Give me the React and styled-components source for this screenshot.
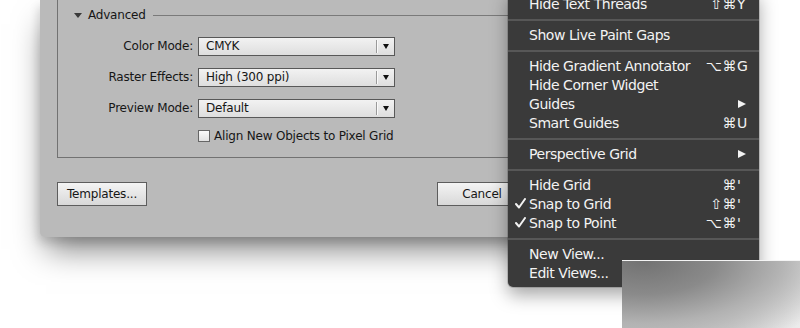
import React from "react";
import styled, { createGlobalStyle } from "styled-components";

const Global = createGlobalStyle`
  html, body { margin: 0; padding: 0; background: #ffffff; }
  body { font-family: "DejaVu Sans", "Liberation Sans", sans-serif; }
`;

const Page = styled.div`
  position: relative;
  width: 800px;
  height: 328px;
  overflow: hidden;
  background: #ffffff;
  padding-left: 40px;
  box-sizing: border-box;
`;

const Dialog = styled.div`
  width: 504px;
  box-sizing: border-box;
  background: #bababa;
  border-radius: 0 0 5px 5px;
  padding: 0 17px 31px;
  box-shadow: 0 18px 30px -6px rgba(0, 0, 0, 0.5), -2px 6px 10px rgba(0, 0, 0, 0.12);
  font-size: 12px;
  letter-spacing: -0.2px;
  color: #161616;
`;

const GroupBox = styled.div`
  border: 1px solid #727272;
  border-top: none;
  padding: 6px 0 15px;
`;

const Disclosure = styled.div`
  display: flex;
  align-items: center;
  height: 18px;
  padding-left: 16px;
  gap: 6px;
`;

const Triangle = styled.span`
  width: 0;
  height: 0;
  border-left: 4px solid transparent;
  border-right: 4px solid transparent;
  border-top: 5px solid #3a3a3a;
  margin-top: 1px;
`;

const Rule = styled.span`
  flex: 1;
  height: 1px;
  background: #7a7a7a;
  margin-left: 1px;
`;

const Form = styled.div`
  display: grid;
  grid-template-columns: 135px 197px;
  column-gap: 5px;
  row-gap: 12px;
  margin-top: 13px;
`;

const Label = styled.label`
  justify-self: end;
  align-self: center;
  line-height: 19px;
`;

const Select = styled.div`
  display: flex;
  align-items: center;
  height: 19px;
  box-sizing: border-box;
  border: 1px solid #585858;
  background: linear-gradient(#f2f2f2, #dedede);
`;

const SelectValue = styled.span`
  flex: 1;
  padding-left: 7px;
  line-height: 17px;
`;

const SelectDivider = styled.span`
  width: 1px;
  height: 13px;
  background: #9a9a9a;
  box-shadow: 1px 0 0 #fafafa;
`;

const SelectArrow = styled.span`
  width: 17px;
  display: flex;
  justify-content: center;
  &::after {
    content: "";
    border-left: 3.5px solid transparent;
    border-right: 3.5px solid transparent;
    border-top: 5px solid #111;
  }
`;

const CheckRow = styled.div`
  grid-column: 2;
  display: flex;
  align-items: center;
  gap: 4px;
  height: 12px;
`;

const CheckBox = styled.span`
  width: 12px;
  height: 12px;
  box-sizing: border-box;
  border: 1px solid #666;
  background: linear-gradient(#fafafa, #e2e2e2);
`;

const Footer = styled.div`
  display: flex;
  justify-content: space-between;
  margin-top: 24px;
`;

const Button = styled.button`
  width: 90px;
  height: 24px;
  box-sizing: border-box;
  border: 1px solid #5d5d5d;
  background: linear-gradient(#f4f4f4, #d8d8d8);
  font-family: "DejaVu Sans", sans-serif;
  font-size: 12px;
  letter-spacing: -0.2px;
  color: #161616;
  padding: 0;
`;

const Menu = styled.div`
  position: absolute;
  left: 508px;
  top: -10px;
  width: 251px;
  background: #3a3a3a;
  border-radius: 0 0 5px 5px;
  padding: 4px 0 5px;
  box-shadow: 0 8px 18px rgba(0, 0, 0, 0.35), 0 0 0 1px rgba(0, 0, 0, 0.15);
  font-size: 14px;
  letter-spacing: -0.45px;
  color: #f3f3f3;
`;

const Item = styled.div`
  display: flex;
  align-items: center;
  height: 19px;
  padding-left: 7px;
  padding-right: 12px;
`;

const CheckSlot = styled.span`
  width: 14px;
  display: flex;
  align-items: center;
`;

const ItemText = styled.span`
  flex: 1;
`;

const Shortcut = styled.span`
  display: flex;
  letter-spacing: 0.5px;
  font-size: 14px;
`;

const Mods = styled.span`
  text-align: right;
`;

const Key = styled.span`
  width: ${(p) => p.$w || 10}px;
  text-align: left;
  letter-spacing: 0;
`;

const SubArrow = styled.span`
  width: 0;
  height: 0;
  margin-right: 1px;
  border-top: 4.5px solid transparent;
  border-bottom: 4.5px solid transparent;
  border-left: 8px solid #f3f3f3;
`;

const Separator = styled.div`
  height: 2px;
  margin: 6px 0 4px;
  background: #575757;
`;

const Patch = styled.div`
  position: absolute;
  left: 622px;
  top: 260px;
  width: 178px;
  height: 68px;
  border-top: 1px solid #f4f4f4;
  background:
    radial-gradient(ellipse 210px 95px at 12% 0%, #727272 0%, #8a8a8a 35%, #b2b2b2 65%, rgba(220,220,220,0) 100%),
    linear-gradient(90deg, #c6c6c6 0%, #d4d4d4 60%, #ececec 100%);
`;

const Tick = () => (
  <svg width="11" height="11" viewBox="0 0 11 11">
    <path d="M1 6 L4 9.5 L10 1" fill="none" stroke="#f3f3f3" strokeWidth="2" strokeLinecap="round" strokeLinejoin="round" />
  </svg>
);

const menuGroups = [
  [{ label: "Hide Text Threads", mods: "⇧⌘", key: "Y" }],
  [{ label: "Show Live Paint Gaps" }],
  [
    { label: "Hide Gradient Annotator", mods: "⌥⌘", key: "G" },
    { label: "Hide Corner Widget" },
    { label: "Guides", sub: true },
    { label: "Smart Guides", mods: "⌘", key: "U" },
  ],
  [{ label: "Perspective Grid", sub: true }],
  [
    { label: "Hide Grid", mods: "⌘", key: "'" },
    { label: "Snap to Grid", mods: "⇧⌘", key: "'", checked: true },
    { label: "Snap to Point", mods: "⌥⌘", key: "'", checked: true },
  ],
  [{ label: "New View..." }, { label: "Edit Views..." }],
];

const fields = [
  { label: "Color Mode:", value: "CMYK" },
  { label: "Raster Effects:", value: "High (300 ppi)" },
  { label: "Preview Mode:", value: "Default" },
];

export default function App() {
  return (
    <>
      <Global />
      <Page>
        <Dialog>
          <GroupBox>
            <Disclosure>
              <Triangle />
              <span>Advanced</span>
              <Rule />
            </Disclosure>
            <Form>
              {fields.map((f) => (
                <React.Fragment key={f.label}>
                  <Label>{f.label}</Label>
                  <Select>
                    <SelectValue>{f.value}</SelectValue>
                    <SelectDivider />
                    <SelectArrow />
                  </Select>
                </React.Fragment>
              ))}
              <CheckRow>
                <CheckBox />
                <span>Align New Objects to Pixel Grid</span>
              </CheckRow>
            </Form>
          </GroupBox>
          <Footer>
            <Button>Templates...</Button>
            <Button>Cancel</Button>
          </Footer>
        </Dialog>
        <Menu>
          {menuGroups.map((g, gi) => (
            <React.Fragment key={gi}>
              {gi > 0 && <Separator />}
              {g.map((it) => (
                <Item key={it.label}>
                  <CheckSlot>{it.checked && <Tick />}</CheckSlot>
                  <ItemText>{it.label}</ItemText>
                  {it.mods && (
                    <Shortcut>
                      <Mods>{it.mods}</Mods>
                      <Key $w={10}>{it.key}</Key>
                    </Shortcut>
                  )}
                  {it.sub && <SubArrow />}
                </Item>
              ))}
            </React.Fragment>
          ))}
        </Menu>
        <Patch />
      </Page>
    </>
  );
}
